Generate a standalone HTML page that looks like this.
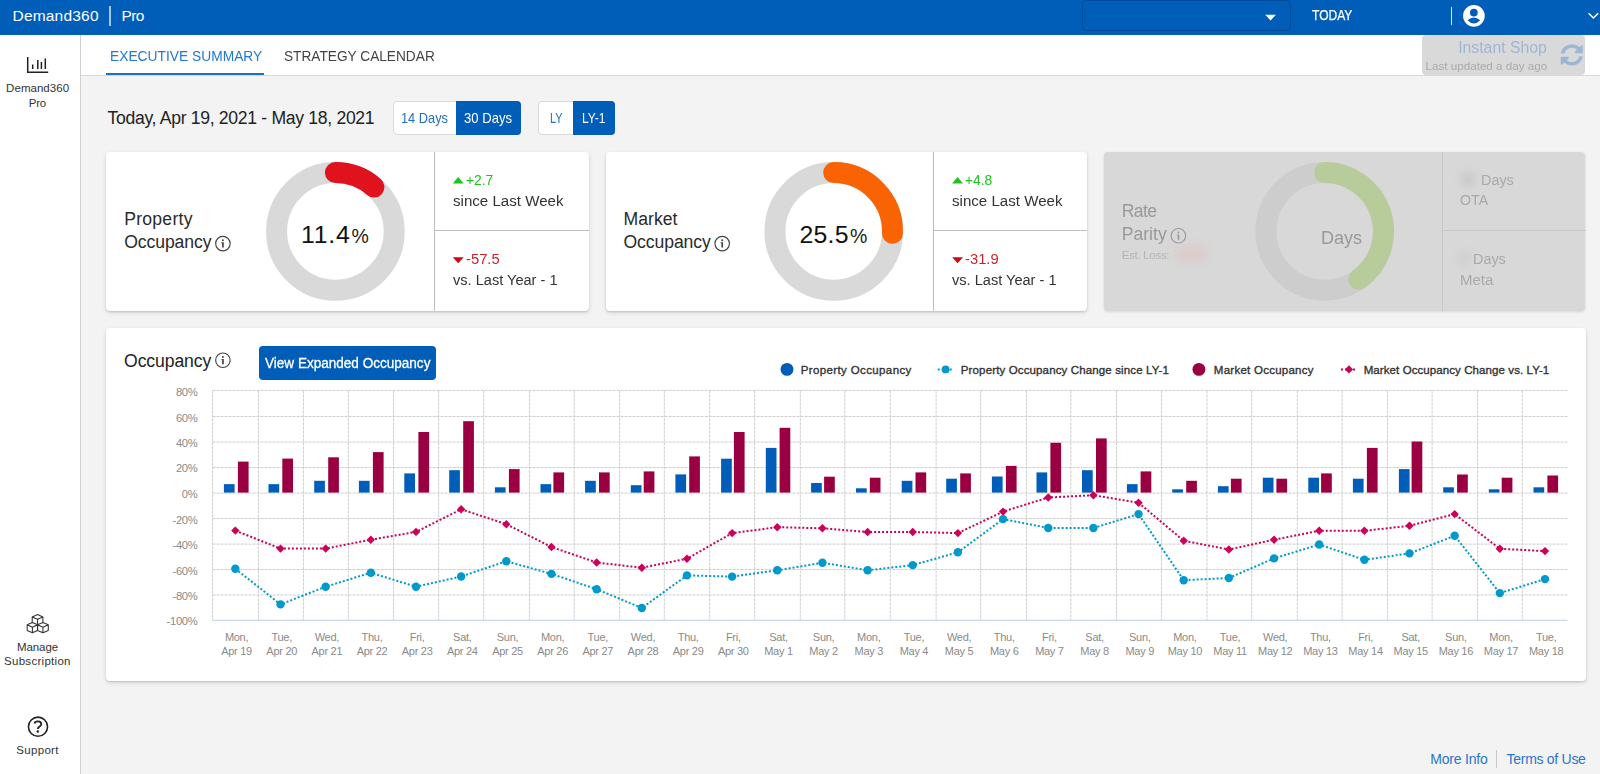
<!DOCTYPE html>
<html><head><meta charset="utf-8"><title>Demand360 Pro</title>
<style>
html,body{margin:0;padding:0;overflow:hidden;}
html{width:1600px;height:774px;}
body{width:1600px;height:774px;overflow:hidden;background:#f3f3f3;font-family:"Liberation Sans",sans-serif;position:relative;}
.t{position:absolute;white-space:nowrap;line-height:1;}
.abs{position:absolute;}
.card{position:absolute;background:#fff;border-radius:4px;box-shadow:0 1px 2px rgba(0,0,0,.14),0 2px 5px rgba(0,0,0,.10);}
svg{position:absolute;overflow:visible;}
</style></head><body>
<div class="abs" style="left:0;top:0;width:1600px;height:34.6px;background:#005eb8;"></div>
<div class="t" id="h_d360" style="top:8.00px;font-size:15.5px;color:#fff;font-weight:normal;letter-spacing:0.194px;left:12.50px;"><span>Demand360</span></div>
<div class="abs" style="left:109px;top:6px;width:1.6px;height:20px;background:rgba(255,255,255,.65);"></div>
<div class="t" id="h_pro" style="top:8.00px;font-size:15.5px;color:#fff;font-weight:normal;letter-spacing:-0.608px;left:121.50px;"><span>Pro</span></div>
<div class="abs" style="left:1082px;top:0.4px;width:209.2px;height:30.2px;border:1px solid #004c9b;border-radius:4px;box-sizing:border-box;background:#005eb8;"></div>
<svg style="left:0;top:0;" width="1600" height="35"><path d="M1265.2 14.8 L1275.9 14.8 L1270.55 20.6 Z" fill="#fff"/></svg>
<div class="t" id="h_today" style="top:8.00px;font-size:14.0px;color:#fff;font-weight:normal;letter-spacing:0.000px;-webkit-text-stroke:0.25px #fff;transform:scaleX(0.8586);transform-origin:left center;left:1312.20px;"><span>TODAY</span></div>
<div class="abs" style="left:1450.9px;top:7px;width:1.6px;height:17.6px;background:rgba(255,255,255,.85);"></div>
<svg style="left:0;top:0;" width="1600" height="774"><g transform="translate(1463.05 4.95) scale(1.0333 1.0333)"><circle cx="10.5" cy="10.5" r="10.5" fill="#fff"/>
<circle cx="10.45" cy="7.4" r="3.75" fill="#005eb8"/>
<path d="M4.4 14.8 Q10.45 9.6 16.6 14.8 Q10.45 21.2 4.4 14.8 Z" fill="#005eb8"/></g></svg>
<svg style="left:0;top:0;" width="1600" height="35"><path d="M1588.6 13.2 L1593.4 18 L1598.2 13.2" fill="none" stroke="#fff" stroke-width="1.5"/></svg>
<div class="abs" style="left:0;top:34.6px;width:80px;height:739.4px;background:#fff;border-right:1px solid #cfcfcf;"></div>
<svg style="left:0;top:0;" width="80" height="120">
<path d="M27.7 57 V72.2 H48.2" fill="none" stroke="#222" stroke-width="1.5"/>
<path d="M32.7 64.6 V69 M37.8 59.9 V69 M41.4 61.9 V69 M45.3 58.6 V69" fill="none" stroke="#222" stroke-width="1.5"/>
</svg>
<div class="t" id="s_d360" style="top:83.00px;font-size:11.5px;color:#333;font-weight:normal;letter-spacing:0.038px;left:-12.40px;width:100px;text-align:center;"><span>Demand360</span></div>
<div class="t" id="s_pro" style="top:98.00px;font-size:11.5px;color:#333;font-weight:normal;letter-spacing:-0.169px;left:-12.60px;width:100px;text-align:center;"><span>Pro</span></div>
<svg style="left:0;top:0;" width="80" height="700">
<g fill="none" stroke="#333" stroke-width="1.05" stroke-linejoin="round" stroke-linecap="round">
<path d="M32.2 622.6 V616.9 L37.56 614.4 L42.9 616.9 V622.6 M32.2 616.9 L37.56 619.3 L42.9 616.9 M37.56 619.3 V624.7"/>
<path d="M27.2 624.7 L32.4 622.5 L37.56 624.7 V630.5 L32.4 632.8 L27.2 630.5 Z M27.2 624.7 L32.4 627.2 L37.56 624.7 M32.4 627.2 V632.8"/>
<path d="M37.56 624.7 L42.9 622.5 L48.3 624.7 V630.5 L42.9 632.8 L37.56 630.5 Z M37.56 624.7 L42.9 627.2 L48.3 624.7 M42.9 627.2 V632.8"/>
</g></svg>
<div class="t" id="s_manage" style="top:642.00px;font-size:11.5px;color:#333;font-weight:normal;letter-spacing:-0.094px;left:-12.50px;width:100px;text-align:center;"><span>Manage</span></div>
<div class="t" id="s_subs" style="top:656.00px;font-size:11.5px;color:#333;font-weight:normal;letter-spacing:0.292px;left:-12.60px;width:100px;text-align:center;"><span>Subscription</span></div>
<svg style="left:0;top:0;" width="1600" height="774"><g transform="translate(27.50 716.20) scale(1.0000 1.0000)"><circle cx="10.5" cy="10.5" r="9.55" fill="none" stroke="#222" stroke-width="1.6"/>
<path d="M7.0 7.3 C7.6 4.4 13.8 4.3 13.8 8.0 C13.8 10.3 10.3 10.5 10.3 12.9" fill="none" stroke="#222" stroke-width="1.85"/>
<circle cx="10.3" cy="15.4" r="1.25" fill="#222"/></g></svg>
<div class="t" id="s_support" style="top:745.00px;font-size:11.5px;color:#333;font-weight:normal;letter-spacing:0.346px;left:-12.50px;width:100px;text-align:center;"><span>Support</span></div>
<div class="abs" style="left:81px;top:34.6px;width:1519px;height:40.4px;background:#fff;border-bottom:1px solid #d9d9d9;"></div>
<div class="t" id="tab1" style="top:48.00px;font-size:15.5px;color:#2478cf;font-weight:normal;letter-spacing:0.000px;transform:scaleX(0.8898);transform-origin:left center;left:109.50px;"><span>EXECUTIVE SUMMARY</span></div>
<div class="abs" style="left:106.3px;top:72.7px;width:158px;height:2.3px;background:#1a6fc9;"></div>
<div class="t" id="tab2" style="top:48.00px;font-size:15.5px;color:#444;font-weight:normal;letter-spacing:0.000px;transform:scaleX(0.8825);transform-origin:left center;left:283.75px;"><span>STRATEGY CALENDAR</span></div>
<div class="abs" style="left:1422.2px;top:35.4px;width:163.3px;height:39.4px;background:#d9d9d9;border-radius:4px;"></div>
<div class="t" id="is1" style="top:40.00px;font-size:16.0px;color:#9fb7d3;font-weight:normal;letter-spacing:0.000px;transform:scaleX(0.9873);transform-origin:right center;right:52.90px;"><span>Instant Shop</span></div>
<div class="t" id="is2" style="top:61.00px;font-size:11.8px;color:#aaaaaa;font-weight:normal;letter-spacing:0.000px;transform:scaleX(0.9884);transform-origin:right center;right:52.90px;"><span>Last updated a day ago</span></div>
<svg style="left:0;top:0;" width="1600" height="774"><g transform="translate(1560.40 43.90) scale(0.0445 0.0430)"><path fill="#9db6d3" d="M370.72 133.28C339.458 104.008 298.888 87.962 255.848 88c-77.458.068-144.328 53.178-162.791 126.85-1.344 5.363-6.122 9.15-11.651 9.15H24.103c-7.498 0-13.194-6.807-11.807-14.176C33.933 94.924 134.813 8 256 8c66.448 0 126.791 26.136 171.315 68.685L463.03 40.97C478.149 25.851 504 36.559 504 57.941V192c0 13.255-10.745 24-24 24H345.941c-21.382 0-32.09-25.851-16.971-40.971l41.75-41.749zM32 296h134.059c21.382 0 32.09 25.851 16.971 40.971l-41.75 41.75c31.262 29.273 71.835 45.319 114.876 45.28 77.418-.07 144.315-53.144 162.787-126.849 1.344-5.363 6.122-9.15 11.651-9.15h57.304c7.498 0 13.194 6.807 11.807 14.176C478.067 417.076 377.187 504 256 504c-66.448 0-126.791-26.136-171.315-68.685L48.97 471.03C33.851 486.149 8 475.441 8 454.059V320c0-13.255 10.745-24 24-24z"/></g></svg>
<div class="t" id="date" style="top:110.00px;font-size:17.6px;color:#222;font-weight:normal;letter-spacing:-0.313px;left:107.50px;"><span>Today, Apr 19, 2021 - May 18, 2021</span></div>
<div class="abs" style="left:392.8px;top:101.2px;width:127.8px;height:33.6px;background:#fff;border:1px solid #dadada;border-radius:4px;box-sizing:border-box;"></div>
<div class="abs" style="left:456px;top:101.2px;width:64.6px;height:33.6px;background:#005eb8;border-radius:0 4px 4px 0;"></div>
<div class="t" id="b14" style="top:111.00px;font-size:14.3px;color:#1f6fc5;font-weight:normal;letter-spacing:0.000px;transform:scaleX(0.8960);transform-origin:left center;left:401.30px;"><span>14 Days</span></div>
<div class="t" id="b30" style="top:111.00px;font-size:14.3px;color:#fff;font-weight:normal;letter-spacing:0.000px;transform:scaleX(0.9151);transform-origin:left center;left:464.30px;"><span>30 Days</span></div>
<div class="abs" style="left:537.9px;top:101.2px;width:76.9px;height:33.6px;background:#fff;border:1px solid #dadada;border-radius:4px;box-sizing:border-box;"></div>
<div class="abs" style="left:573.1px;top:101.2px;width:41.7px;height:33.6px;background:#005eb8;border-radius:0 4px 4px 0;"></div>
<div class="t" id="bly" style="top:111.00px;font-size:14.3px;color:#1f6fc5;font-weight:normal;letter-spacing:0.000px;transform:scaleX(0.7665);transform-origin:left center;left:549.80px;"><span>LY</span></div>
<div class="t" id="bly1" style="top:111.00px;font-size:14.3px;color:#fff;font-weight:normal;letter-spacing:0.000px;transform:scaleX(0.8445);transform-origin:left center;left:582.00px;"><span>LY-1</span></div>
<div class="card" style="left:106.3px;top:152.2px;width:482.4px;height:158.8px;"></div>
<div class="abs" style="left:434.0px;top:152.2px;width:1px;height:158.8px;background:#bdbdbd;"></div>
<div class="abs" style="left:434.0px;top:230.2px;width:154.7px;height:1px;background:#bdbdbd;"></div>
<div class="t" id="k1l1" style="top:211.00px;font-size:17.6px;color:#2a2a2a;font-weight:normal;letter-spacing:0.250px;left:124.20px;"><span>Property</span></div>
<div class="t" id="k1l2" style="top:234.00px;font-size:17.6px;color:#2a2a2a;font-weight:normal;letter-spacing:-0.091px;left:124.20px;"><span>Occupancy</span></div>
<svg style="left:0;top:0;" width="1600" height="774"><g transform="translate(214.90 235.60) scale(1.0000 1.0000)"><circle cx="8" cy="8" r="7.25" fill="none" stroke="#444" stroke-width="1.15"/><circle cx="8" cy="4.75" r="1.0" fill="#444"/><path d="M6.4 6.7 H8.9 V12 H7.2 V7.6 H6.4 Z" fill="#444"/></g></svg>
<svg style="left:0;top:0;" width="1600" height="320"><circle cx="335.40" cy="231.4" r="58.8" fill="none" stroke="#d9d9d9" stroke-width="21"/><path d="M335.40 172.60 A58.8 58.8 0 0 1 374.01 187.05" fill="none" stroke="#e0121e" stroke-width="21" stroke-linecap="round"/></svg>
<div class="t" id="k1v" style="top:223.00px;font-size:24.8px;color:#111;font-weight:normal;letter-spacing:0.770px;left:301.10px;"><span>11.4</span></div>
<div class="t" id="k1p" style="top:227.00px;font-size:19.5px;color:#222;font-weight:normal;letter-spacing:0.000px;left:351.60px;"><span>%</span></div>
<svg style="left:0;top:0;" width="1600" height="320"><path d="M452.8 183.5 L463.7 183.5 L458.2 177.1 Z" fill="#1fc21f"/><path d="M452.8 257.3 L463.7 257.3 L458.2 263.2 Z" fill="#cc0a14"/></svg>
<div class="t" id="k1u" style="top:172.00px;font-size:15.3px;color:#22c122;font-weight:normal;letter-spacing:0.000px;transform:scaleX(0.9039);transform-origin:left center;left:466.00px;"><span>+2.7</span></div>
<div class="t" id="k1u2" style="top:193.00px;font-size:15.5px;color:#333;font-weight:normal;letter-spacing:0.000px;transform:scaleX(0.9741);transform-origin:left center;left:452.80px;"><span>since Last Week</span></div>
<div class="t" id="k1d" style="top:251.00px;font-size:15.3px;color:#d0202d;font-weight:normal;letter-spacing:0.000px;transform:scaleX(0.9663);transform-origin:left center;left:466.00px;"><span>-57.5</span></div>
<div class="t" id="k1d2" style="top:272.00px;font-size:15.5px;color:#333;font-weight:normal;letter-spacing:0.000px;transform:scaleX(0.9401);transform-origin:left center;left:452.80px;"><span>vs. Last Year - 1</span></div>
<div class="card" style="left:605.6px;top:152.2px;width:481.7px;height:158.8px;"></div>
<div class="abs" style="left:933.3px;top:152.2px;width:1px;height:158.8px;background:#bdbdbd;"></div>
<div class="abs" style="left:933.3px;top:230.2px;width:154.0px;height:1px;background:#bdbdbd;"></div>
<div class="t" id="k2l1" style="top:211.00px;font-size:17.6px;color:#2a2a2a;font-weight:normal;letter-spacing:0.036px;left:623.50px;"><span>Market</span></div>
<div class="t" id="k2l2" style="top:234.00px;font-size:17.6px;color:#2a2a2a;font-weight:normal;letter-spacing:-0.091px;left:623.50px;"><span>Occupancy</span></div>
<svg style="left:0;top:0;" width="1600" height="774"><g transform="translate(714.20 235.60) scale(1.0000 1.0000)"><circle cx="8" cy="8" r="7.25" fill="none" stroke="#444" stroke-width="1.15"/><circle cx="8" cy="4.75" r="1.0" fill="#444"/><path d="M6.4 6.7 H8.9 V12 H7.2 V7.6 H6.4 Z" fill="#444"/></g></svg>
<svg style="left:0;top:0;" width="1600" height="320"><circle cx="833.70" cy="231.4" r="58.8" fill="none" stroke="#d9d9d9" stroke-width="21"/><path d="M833.70 172.60 A58.8 58.8 0 0 1 892.47 233.25" fill="none" stroke="#f96302" stroke-width="21" stroke-linecap="round"/></svg>
<div class="t" id="k2v" style="top:223.00px;font-size:24.8px;color:#111;font-weight:normal;letter-spacing:0.309px;left:799.40px;"><span>25.5</span></div>
<div class="t" id="k2p" style="top:227.00px;font-size:19.5px;color:#222;font-weight:normal;letter-spacing:0.000px;left:849.90px;"><span>%</span></div>
<svg style="left:0;top:0;" width="1600" height="320"><path d="M952.1 183.5 L963.0 183.5 L957.6 177.1 Z" fill="#1fc21f"/><path d="M952.1 257.3 L963.0 257.3 L957.6 263.2 Z" fill="#cc0a14"/></svg>
<div class="t" id="k2u" style="top:172.00px;font-size:15.3px;color:#22c122;font-weight:normal;letter-spacing:0.000px;transform:scaleX(0.9039);transform-origin:left center;left:965.30px;"><span>+4.8</span></div>
<div class="t" id="k2u2" style="top:193.00px;font-size:15.5px;color:#333;font-weight:normal;letter-spacing:0.000px;transform:scaleX(0.9741);transform-origin:left center;left:952.10px;"><span>since Last Week</span></div>
<div class="t" id="k2d" style="top:251.00px;font-size:15.3px;color:#d0202d;font-weight:normal;letter-spacing:0.000px;transform:scaleX(0.9663);transform-origin:left center;left:965.30px;"><span>-31.9</span></div>
<div class="t" id="k2d2" style="top:272.00px;font-size:15.5px;color:#333;font-weight:normal;letter-spacing:0.000px;transform:scaleX(0.9401);transform-origin:left center;left:952.10px;"><span>vs. Last Year - 1</span></div>
<div class="abs" style="left:0;top:0;width:1600px;height:330px;filter:blur(0.5px);">
<div class="card" style="left:1104.2px;top:152.2px;width:481.3px;height:158.6px;background:#d8d8d8;box-shadow:0 1px 3px rgba(0,0,0,.12);"></div>
<div class="abs" style="left:1442.1px;top:152.2px;width:1px;height:158.8px;background:#c8c8c8;"></div>
<div class="abs" style="left:1442.1px;top:230.2px;width:143.5px;height:1px;background:#c8c8c8;"></div>
<div class="t" id="k3l1" style="top:203.00px;font-size:17.6px;color:#999;font-weight:normal;letter-spacing:-0.593px;left:1121.70px;"><span>Rate</span></div>
<div class="t" id="k3l2" style="top:226.00px;font-size:17.6px;color:#999;font-weight:normal;letter-spacing:0.003px;left:1121.70px;"><span>Parity</span></div>
<svg style="left:0;top:0;" width="1600" height="774"><g transform="translate(1170.40 227.70) scale(1.0000 1.0000)"><circle cx="8" cy="8" r="7.25" fill="none" stroke="#9a9a9a" stroke-width="1.15"/><circle cx="8" cy="4.75" r="1.0" fill="#9a9a9a"/><path d="M6.4 6.7 H8.9 V12 H7.2 V7.6 H6.4 Z" fill="#9a9a9a"/></g></svg>
<div class="t" id="k3l3" style="top:250.00px;font-size:11.4px;color:#b4b4b4;font-weight:normal;letter-spacing:-0.242px;left:1121.70px;"><span>Est. Loss:</span></div>
<div class="abs" style="left:1174px;top:247px;width:34px;height:14px;border-radius:7px;background:rgba(228,190,190,.5);filter:blur(5px);"></div>
<svg style="left:0;top:0;" width="1600" height="320"><circle cx="1324.7" cy="231.3" r="58.8" fill="none" stroke="#cdcdcd" stroke-width="21"/><path d="M1324.70 172.50 A58.8 58.8 0 0 1 1358.85 279.17" fill="none" stroke="#b8cb9a" stroke-width="21" stroke-linecap="round"/></svg>
<div class="t" id="k3v" style="top:229.00px;font-size:18px;color:#999;font-weight:normal;letter-spacing:-0.004px;left:1321.00px;"><span>Days</span></div>
<div class="abs" style="left:1460px;top:172px;width:16px;height:15px;border-radius:6px;background:rgba(200,200,200,.8);filter:blur(3.5px);"></div>
<div class="t" id="k3a" style="top:172.00px;font-size:15.5px;color:#a9a9a9;font-weight:normal;letter-spacing:0.000px;transform:scaleX(0.9284);transform-origin:left center;left:1481.25px;"><span>Days</span></div>
<div class="t" id="k3b" style="top:192.00px;font-size:15.5px;color:#a9a9a9;font-weight:normal;letter-spacing:0.000px;transform:scaleX(0.9148);transform-origin:left center;left:1460.30px;"><span>OTA</span></div>
<div class="abs" style="left:1459px;top:251px;width:11px;height:15px;border-radius:6px;background:rgba(205,205,205,.8);filter:blur(3.5px);"></div>
<div class="t" id="k3c" style="top:251.00px;font-size:15.5px;color:#a9a9a9;font-weight:normal;letter-spacing:0.000px;transform:scaleX(0.9284);transform-origin:left center;left:1472.80px;"><span>Days</span></div>
<div class="t" id="k3d" style="top:272.00px;font-size:15.5px;color:#a9a9a9;font-weight:normal;letter-spacing:0.000px;transform:scaleX(0.9690);transform-origin:left center;left:1460.30px;"><span>Meta</span></div>
</div>
<div class="card" style="left:106.3px;top:327.6px;width:1479.4px;height:353.0px;"></div>
<div class="t" id="c_title" style="top:353.00px;font-size:17.6px;color:#222;font-weight:normal;letter-spacing:-0.113px;left:124.10px;"><span>Occupancy</span></div>
<svg style="left:0;top:0;" width="1600" height="774"><g transform="translate(214.90 352.20) scale(1.0000 1.0000)"><circle cx="8" cy="8" r="7.25" fill="none" stroke="#444" stroke-width="1.15"/><circle cx="8" cy="4.75" r="1.0" fill="#444"/><path d="M6.4 6.7 H8.9 V12 H7.2 V7.6 H6.4 Z" fill="#444"/></g></svg>
<div class="abs" style="left:259.1px;top:345.7px;width:176.6px;height:34px;background:#005eb8;border-radius:4px;"></div>
<div class="t" id="c_btn" style="top:356.00px;font-size:14.7px;color:#fff;font-weight:normal;letter-spacing:0.000px;-webkit-text-stroke:0.3px #fff;transform:scaleX(0.9222);transform-origin:left center;left:264.90px;"><span>View Expanded Occupancy</span></div>
<svg style="left:0;top:0;" width="1600" height="400"><circle cx="787" cy="369.4" r="6.45" fill="#005eb8"/><path d="M937.7 369.4 H953" stroke="#0099cc" stroke-width="2" stroke-dasharray="2 2" fill="none"/><circle cx="945.6" cy="369.4" r="3.9" fill="#0099cc"/><circle cx="1198.9" cy="369.4" r="6.45" fill="#9a0041"/><path d="M1341 369.4 H1356.6" stroke="#cc0058" stroke-width="2" stroke-dasharray="2 2" fill="none"/><path d="M1349 365.29999999999995 l4.1 4.1 l-4.1 4.1 l-4.1 -4.1 Z" fill="#cc0058"/></svg>
<div class="t" id="lg1" style="top:365.00px;font-size:11.5px;color:#333;font-weight:normal;letter-spacing:0.378px;-webkit-text-stroke:0.35px #333;left:800.70px;"><span>Property Occupancy</span></div>
<div class="t" id="lg2" style="top:365.00px;font-size:11.5px;color:#333;font-weight:normal;letter-spacing:0.136px;-webkit-text-stroke:0.35px #333;left:960.80px;"><span>Property Occupancy Change since LY-1</span></div>
<div class="t" id="lg3" style="top:365.00px;font-size:11.5px;color:#333;font-weight:normal;letter-spacing:0.258px;-webkit-text-stroke:0.35px #333;left:1213.80px;"><span>Market Occupancy</span></div>
<div class="t" id="lg4" style="top:365.00px;font-size:11.5px;color:#333;font-weight:normal;letter-spacing:0.087px;-webkit-text-stroke:0.35px #333;left:1363.70px;"><span>Market Occupancy Change vs. LY-1</span></div>
<svg style="left:0;top:0;" width="1600" height="700">
<g fill="none" stroke="#cdcdcd" stroke-width="1" stroke-dasharray="3 1">
<path d="M212.6 390.35 H1567.5"/><path d="M212.6 416.45 H1567.5"/><path d="M212.6 442.1 H1567.5"/><path d="M212.6 467.55 H1567.5"/><path d="M212.6 493.1 H1567.5"/><path d="M212.6 518.6 H1567.5"/><path d="M212.6 544.1 H1567.5"/><path d="M212.6 569.5 H1567.5"/><path d="M212.6 594.95 H1567.5"/><path d="M212.60 390.35 V620.4"/><path d="M258.40 390.35 V620.4"/><path d="M303.40 390.35 V620.4"/><path d="M348.40 390.35 V620.4"/><path d="M393.50 390.35 V620.4"/><path d="M438.70 390.35 V620.4"/><path d="M483.70 390.35 V620.4"/><path d="M529.40 390.35 V620.4"/><path d="M574.20 390.35 V620.4"/><path d="M619.60 390.35 V620.4"/><path d="M664.30 390.35 V620.4"/><path d="M709.70 390.35 V620.4"/><path d="M754.70 390.35 V620.4"/><path d="M800.30 390.35 V620.4"/><path d="M844.80 390.35 V620.4"/><path d="M890.30 390.35 V620.4"/><path d="M936.10 390.35 V620.4"/><path d="M980.70 390.35 V620.4"/><path d="M1026.40 390.35 V620.4"/><path d="M1070.80 390.35 V620.4"/><path d="M1116.50 390.35 V620.4"/><path d="M1161.40 390.35 V620.4"/><path d="M1207.00 390.35 V620.4"/><path d="M1251.70 390.35 V620.4"/><path d="M1297.30 390.35 V620.4"/><path d="M1342.10 390.35 V620.4"/><path d="M1387.40 390.35 V620.4"/><path d="M1432.10 390.35 V620.4"/><path d="M1477.60 390.35 V620.4"/><path d="M1522.30 390.35 V620.4"/></g>
<path d="M212.6 620.4 H1567.5" stroke="#ccd6eb" stroke-width="1.2" fill="none"/>
<g fill="#005eb8"><rect x="223.9" y="484.15" width="10.7" height="8.45"/><rect x="268.5" y="484.15" width="10.7" height="8.45"/><rect x="314.2" y="480.80" width="10.7" height="11.80"/><rect x="358.9" y="480.80" width="10.7" height="11.80"/><rect x="404.3" y="473.40" width="10.7" height="19.20"/><rect x="449.2" y="470.20" width="10.7" height="22.40"/><rect x="494.9" y="487.30" width="10.7" height="5.30"/><rect x="540.5" y="484.15" width="10.7" height="8.45"/><rect x="585.1" y="480.80" width="10.7" height="11.80"/><rect x="630.8" y="485.20" width="10.7" height="7.40"/><rect x="675.4" y="474.40" width="10.7" height="18.20"/><rect x="721.1" y="458.70" width="10.7" height="33.90"/><rect x="765.8" y="447.90" width="10.7" height="44.70"/><rect x="811.1" y="483.00" width="10.7" height="9.60"/><rect x="856.0" y="488.30" width="10.7" height="4.30"/><rect x="901.7" y="480.80" width="10.7" height="11.80"/><rect x="946.2" y="478.70" width="10.7" height="13.90"/><rect x="991.9" y="476.50" width="10.7" height="16.10"/><rect x="1036.5" y="472.40" width="10.7" height="20.20"/><rect x="1082.0" y="470.20" width="10.7" height="22.40"/><rect x="1126.9" y="484.15" width="10.7" height="8.45"/><rect x="1172.2" y="489.30" width="10.7" height="3.30"/><rect x="1217.9" y="486.20" width="10.7" height="6.40"/><rect x="1262.8" y="477.70" width="10.7" height="14.90"/><rect x="1308.3" y="477.70" width="10.7" height="14.90"/><rect x="1352.9" y="478.70" width="10.7" height="13.90"/><rect x="1398.9" y="469.10" width="10.7" height="23.50"/><rect x="1443.2" y="487.30" width="10.7" height="5.30"/><rect x="1488.8" y="489.30" width="10.7" height="3.30"/><rect x="1533.5" y="487.30" width="10.7" height="5.30"/></g>
<g fill="#9a0041"><rect x="237.9" y="461.60" width="10.7" height="31.00"/><rect x="282.3" y="458.60" width="10.7" height="34.00"/><rect x="328.2" y="457.30" width="10.7" height="35.30"/><rect x="372.9" y="452.10" width="10.7" height="40.50"/><rect x="418.4" y="432.00" width="10.7" height="60.60"/><rect x="463.2" y="421.20" width="10.7" height="71.40"/><rect x="508.9" y="469.10" width="10.7" height="23.50"/><rect x="553.4" y="472.40" width="10.7" height="20.20"/><rect x="599.0" y="472.40" width="10.7" height="20.20"/><rect x="643.7" y="471.40" width="10.7" height="21.20"/><rect x="689.2" y="456.40" width="10.7" height="36.20"/><rect x="733.9" y="432.00" width="10.7" height="60.60"/><rect x="779.6" y="427.80" width="10.7" height="64.80"/><rect x="824.1" y="476.70" width="10.7" height="15.90"/><rect x="869.8" y="477.70" width="10.7" height="14.90"/><rect x="915.5" y="472.40" width="10.7" height="20.20"/><rect x="960.2" y="473.40" width="10.7" height="19.20"/><rect x="1005.9" y="465.90" width="10.7" height="26.70"/><rect x="1050.4" y="442.75" width="10.7" height="49.85"/><rect x="1096.0" y="438.40" width="10.7" height="54.20"/><rect x="1140.6" y="471.40" width="10.7" height="21.20"/><rect x="1186.2" y="480.80" width="10.7" height="11.80"/><rect x="1230.9" y="478.70" width="10.7" height="13.90"/><rect x="1276.4" y="478.70" width="10.7" height="13.90"/><rect x="1321.1" y="473.40" width="10.7" height="19.20"/><rect x="1366.9" y="447.90" width="10.7" height="44.70"/><rect x="1411.6" y="441.50" width="10.7" height="51.10"/><rect x="1457.1" y="474.50" width="10.7" height="18.10"/><rect x="1501.7" y="477.70" width="10.7" height="14.90"/><rect x="1547.4" y="475.50" width="10.7" height="17.10"/></g>
<path d="M235.35 568.75 L280.51 604.40 L325.67 586.70 L370.83 572.70 L415.99 586.70 L461.15 576.50 L506.31 561.25 L551.47 573.90 L596.63 589.20 L641.79 608.00 L686.95 575.40 L732.11 576.60 L777.27 570.30 L822.43 562.70 L867.59 570.30 L912.75 565.10 L957.91 552.30 L1003.07 519.10 L1048.23 528.00 L1093.39 528.00 L1138.55 514.10 L1183.71 580.20 L1228.87 578.00 L1274.03 558.40 L1319.19 544.50 L1364.35 559.80 L1409.51 553.40 L1454.67 535.80 L1499.83 593.10 L1544.99 579.10" fill="none" stroke="#0099cc" stroke-width="2" stroke-dasharray="2 2" stroke-linejoin="round"/>
<g fill="#0099cc"><circle cx="235.35" cy="568.75" r="4.2"/><circle cx="280.51" cy="604.40" r="4.2"/><circle cx="325.67" cy="586.70" r="4.2"/><circle cx="370.83" cy="572.70" r="4.2"/><circle cx="415.99" cy="586.70" r="4.2"/><circle cx="461.15" cy="576.50" r="4.2"/><circle cx="506.31" cy="561.25" r="4.2"/><circle cx="551.47" cy="573.90" r="4.2"/><circle cx="596.63" cy="589.20" r="4.2"/><circle cx="641.79" cy="608.00" r="4.2"/><circle cx="686.95" cy="575.40" r="4.2"/><circle cx="732.11" cy="576.60" r="4.2"/><circle cx="777.27" cy="570.30" r="4.2"/><circle cx="822.43" cy="562.70" r="4.2"/><circle cx="867.59" cy="570.30" r="4.2"/><circle cx="912.75" cy="565.10" r="4.2"/><circle cx="957.91" cy="552.30" r="4.2"/><circle cx="1003.07" cy="519.10" r="4.2"/><circle cx="1048.23" cy="528.00" r="4.2"/><circle cx="1093.39" cy="528.00" r="4.2"/><circle cx="1138.55" cy="514.10" r="4.2"/><circle cx="1183.71" cy="580.20" r="4.2"/><circle cx="1228.87" cy="578.00" r="4.2"/><circle cx="1274.03" cy="558.40" r="4.2"/><circle cx="1319.19" cy="544.50" r="4.2"/><circle cx="1364.35" cy="559.80" r="4.2"/><circle cx="1409.51" cy="553.40" r="4.2"/><circle cx="1454.67" cy="535.80" r="4.2"/><circle cx="1499.83" cy="593.10" r="4.2"/><circle cx="1544.99" cy="579.10" r="4.2"/></g>
<path d="M235.35 530.60 L280.51 548.60 L325.67 548.60 L370.83 539.70 L415.99 531.90 L461.15 509.30 L506.31 524.20 L551.47 547.00 L596.63 562.50 L641.79 567.70 L686.95 558.75 L732.11 533.10 L777.27 527.20 L822.43 528.30 L867.59 532.00 L912.75 532.00 L957.91 533.10 L1003.07 511.60 L1048.23 497.50 L1093.39 495.20 L1138.55 502.70 L1183.71 540.80 L1228.87 549.50 L1274.03 539.70 L1319.19 530.80 L1364.35 530.80 L1409.51 525.80 L1454.67 514.10 L1499.83 548.75 L1544.99 551.10" fill="none" stroke="#cc0058" stroke-width="2" stroke-dasharray="2 2" stroke-linejoin="round"/>
<g fill="#cc0058"><path d="M235.35 526.40 l4.2 4.2 l-4.2 4.2 l-4.2 -4.2 Z"/><path d="M280.51 544.40 l4.2 4.2 l-4.2 4.2 l-4.2 -4.2 Z"/><path d="M325.67 544.40 l4.2 4.2 l-4.2 4.2 l-4.2 -4.2 Z"/><path d="M370.83 535.50 l4.2 4.2 l-4.2 4.2 l-4.2 -4.2 Z"/><path d="M415.99 527.70 l4.2 4.2 l-4.2 4.2 l-4.2 -4.2 Z"/><path d="M461.15 505.10 l4.2 4.2 l-4.2 4.2 l-4.2 -4.2 Z"/><path d="M506.31 520.00 l4.2 4.2 l-4.2 4.2 l-4.2 -4.2 Z"/><path d="M551.47 542.80 l4.2 4.2 l-4.2 4.2 l-4.2 -4.2 Z"/><path d="M596.63 558.30 l4.2 4.2 l-4.2 4.2 l-4.2 -4.2 Z"/><path d="M641.79 563.50 l4.2 4.2 l-4.2 4.2 l-4.2 -4.2 Z"/><path d="M686.95 554.55 l4.2 4.2 l-4.2 4.2 l-4.2 -4.2 Z"/><path d="M732.11 528.90 l4.2 4.2 l-4.2 4.2 l-4.2 -4.2 Z"/><path d="M777.27 523.00 l4.2 4.2 l-4.2 4.2 l-4.2 -4.2 Z"/><path d="M822.43 524.10 l4.2 4.2 l-4.2 4.2 l-4.2 -4.2 Z"/><path d="M867.59 527.80 l4.2 4.2 l-4.2 4.2 l-4.2 -4.2 Z"/><path d="M912.75 527.80 l4.2 4.2 l-4.2 4.2 l-4.2 -4.2 Z"/><path d="M957.91 528.90 l4.2 4.2 l-4.2 4.2 l-4.2 -4.2 Z"/><path d="M1003.07 507.40 l4.2 4.2 l-4.2 4.2 l-4.2 -4.2 Z"/><path d="M1048.23 493.30 l4.2 4.2 l-4.2 4.2 l-4.2 -4.2 Z"/><path d="M1093.39 491.00 l4.2 4.2 l-4.2 4.2 l-4.2 -4.2 Z"/><path d="M1138.55 498.50 l4.2 4.2 l-4.2 4.2 l-4.2 -4.2 Z"/><path d="M1183.71 536.60 l4.2 4.2 l-4.2 4.2 l-4.2 -4.2 Z"/><path d="M1228.87 545.30 l4.2 4.2 l-4.2 4.2 l-4.2 -4.2 Z"/><path d="M1274.03 535.50 l4.2 4.2 l-4.2 4.2 l-4.2 -4.2 Z"/><path d="M1319.19 526.60 l4.2 4.2 l-4.2 4.2 l-4.2 -4.2 Z"/><path d="M1364.35 526.60 l4.2 4.2 l-4.2 4.2 l-4.2 -4.2 Z"/><path d="M1409.51 521.60 l4.2 4.2 l-4.2 4.2 l-4.2 -4.2 Z"/><path d="M1454.67 509.90 l4.2 4.2 l-4.2 4.2 l-4.2 -4.2 Z"/><path d="M1499.83 544.55 l4.2 4.2 l-4.2 4.2 l-4.2 -4.2 Z"/><path d="M1544.99 546.90 l4.2 4.2 l-4.2 4.2 l-4.2 -4.2 Z"/></g>
</svg>
<div class="t" id="yl0" style="top:387.00px;font-size:11.2px;color:#8a8a8a;font-weight:normal;letter-spacing:-0.330px;right:1402.70px;"><span>80%</span></div>
<div class="t" id="yl1" style="top:413.00px;font-size:11.2px;color:#8a8a8a;font-weight:normal;letter-spacing:-0.330px;right:1402.70px;"><span>60%</span></div>
<div class="t" id="yl2" style="top:438.00px;font-size:11.2px;color:#8a8a8a;font-weight:normal;letter-spacing:-0.330px;right:1402.70px;"><span>40%</span></div>
<div class="t" id="yl3" style="top:463.00px;font-size:11.2px;color:#8a8a8a;font-weight:normal;letter-spacing:-0.330px;right:1402.70px;"><span>20%</span></div>
<div class="t" id="yl4" style="top:489.00px;font-size:11.2px;color:#8a8a8a;font-weight:normal;letter-spacing:-0.330px;right:1402.70px;"><span>0%</span></div>
<div class="t" id="yl5" style="top:515.00px;font-size:11.2px;color:#8a8a8a;font-weight:normal;letter-spacing:-0.330px;right:1402.70px;"><span>-20%</span></div>
<div class="t" id="yl6" style="top:540.00px;font-size:11.2px;color:#8a8a8a;font-weight:normal;letter-spacing:-0.330px;right:1402.70px;"><span>-40%</span></div>
<div class="t" id="yl7" style="top:566.00px;font-size:11.2px;color:#8a8a8a;font-weight:normal;letter-spacing:-0.330px;right:1402.70px;"><span>-60%</span></div>
<div class="t" id="yl8" style="top:591.00px;font-size:11.2px;color:#8a8a8a;font-weight:normal;letter-spacing:-0.330px;right:1402.70px;"><span>-80%</span></div>
<div class="t" id="yl9" style="top:616.00px;font-size:11.2px;color:#8a8a8a;font-weight:normal;letter-spacing:-0.330px;right:1402.70px;"><span>-100%</span></div>
<div class="t" id="xa0" style="top:632.00px;font-size:11.0px;color:#8a8a8a;font-weight:normal;letter-spacing:-0.280px;left:186.55px;width:100px;text-align:center;"><span>Mon,</span></div>
<div class="t" id="xb0" style="top:646.00px;font-size:11.0px;color:#8a8a8a;font-weight:normal;letter-spacing:-0.280px;left:186.55px;width:100px;text-align:center;"><span>Apr 19</span></div>
<div class="t" id="xa1" style="top:632.00px;font-size:11.0px;color:#8a8a8a;font-weight:normal;letter-spacing:-0.280px;left:231.71px;width:100px;text-align:center;"><span>Tue,</span></div>
<div class="t" id="xb1" style="top:646.00px;font-size:11.0px;color:#8a8a8a;font-weight:normal;letter-spacing:-0.280px;left:231.71px;width:100px;text-align:center;"><span>Apr 20</span></div>
<div class="t" id="xa2" style="top:632.00px;font-size:11.0px;color:#8a8a8a;font-weight:normal;letter-spacing:-0.280px;left:276.87px;width:100px;text-align:center;"><span>Wed,</span></div>
<div class="t" id="xb2" style="top:646.00px;font-size:11.0px;color:#8a8a8a;font-weight:normal;letter-spacing:-0.280px;left:276.87px;width:100px;text-align:center;"><span>Apr 21</span></div>
<div class="t" id="xa3" style="top:632.00px;font-size:11.0px;color:#8a8a8a;font-weight:normal;letter-spacing:-0.280px;left:322.03px;width:100px;text-align:center;"><span>Thu,</span></div>
<div class="t" id="xb3" style="top:646.00px;font-size:11.0px;color:#8a8a8a;font-weight:normal;letter-spacing:-0.280px;left:322.03px;width:100px;text-align:center;"><span>Apr 22</span></div>
<div class="t" id="xa4" style="top:632.00px;font-size:11.0px;color:#8a8a8a;font-weight:normal;letter-spacing:-0.280px;left:367.19px;width:100px;text-align:center;"><span>Fri,</span></div>
<div class="t" id="xb4" style="top:646.00px;font-size:11.0px;color:#8a8a8a;font-weight:normal;letter-spacing:-0.280px;left:367.19px;width:100px;text-align:center;"><span>Apr 23</span></div>
<div class="t" id="xa5" style="top:632.00px;font-size:11.0px;color:#8a8a8a;font-weight:normal;letter-spacing:-0.280px;left:412.35px;width:100px;text-align:center;"><span>Sat,</span></div>
<div class="t" id="xb5" style="top:646.00px;font-size:11.0px;color:#8a8a8a;font-weight:normal;letter-spacing:-0.280px;left:412.35px;width:100px;text-align:center;"><span>Apr 24</span></div>
<div class="t" id="xa6" style="top:632.00px;font-size:11.0px;color:#8a8a8a;font-weight:normal;letter-spacing:-0.280px;left:457.51px;width:100px;text-align:center;"><span>Sun,</span></div>
<div class="t" id="xb6" style="top:646.00px;font-size:11.0px;color:#8a8a8a;font-weight:normal;letter-spacing:-0.280px;left:457.51px;width:100px;text-align:center;"><span>Apr 25</span></div>
<div class="t" id="xa7" style="top:632.00px;font-size:11.0px;color:#8a8a8a;font-weight:normal;letter-spacing:-0.280px;left:502.67px;width:100px;text-align:center;"><span>Mon,</span></div>
<div class="t" id="xb7" style="top:646.00px;font-size:11.0px;color:#8a8a8a;font-weight:normal;letter-spacing:-0.280px;left:502.67px;width:100px;text-align:center;"><span>Apr 26</span></div>
<div class="t" id="xa8" style="top:632.00px;font-size:11.0px;color:#8a8a8a;font-weight:normal;letter-spacing:-0.280px;left:547.83px;width:100px;text-align:center;"><span>Tue,</span></div>
<div class="t" id="xb8" style="top:646.00px;font-size:11.0px;color:#8a8a8a;font-weight:normal;letter-spacing:-0.280px;left:547.83px;width:100px;text-align:center;"><span>Apr 27</span></div>
<div class="t" id="xa9" style="top:632.00px;font-size:11.0px;color:#8a8a8a;font-weight:normal;letter-spacing:-0.280px;left:592.99px;width:100px;text-align:center;"><span>Wed,</span></div>
<div class="t" id="xb9" style="top:646.00px;font-size:11.0px;color:#8a8a8a;font-weight:normal;letter-spacing:-0.280px;left:592.99px;width:100px;text-align:center;"><span>Apr 28</span></div>
<div class="t" id="xa10" style="top:632.00px;font-size:11.0px;color:#8a8a8a;font-weight:normal;letter-spacing:-0.280px;left:638.15px;width:100px;text-align:center;"><span>Thu,</span></div>
<div class="t" id="xb10" style="top:646.00px;font-size:11.0px;color:#8a8a8a;font-weight:normal;letter-spacing:-0.280px;left:638.15px;width:100px;text-align:center;"><span>Apr 29</span></div>
<div class="t" id="xa11" style="top:632.00px;font-size:11.0px;color:#8a8a8a;font-weight:normal;letter-spacing:-0.280px;left:683.31px;width:100px;text-align:center;"><span>Fri,</span></div>
<div class="t" id="xb11" style="top:646.00px;font-size:11.0px;color:#8a8a8a;font-weight:normal;letter-spacing:-0.280px;left:683.31px;width:100px;text-align:center;"><span>Apr 30</span></div>
<div class="t" id="xa12" style="top:632.00px;font-size:11.0px;color:#8a8a8a;font-weight:normal;letter-spacing:-0.280px;left:728.47px;width:100px;text-align:center;"><span>Sat,</span></div>
<div class="t" id="xb12" style="top:646.00px;font-size:11.0px;color:#8a8a8a;font-weight:normal;letter-spacing:-0.280px;left:728.47px;width:100px;text-align:center;"><span>May 1</span></div>
<div class="t" id="xa13" style="top:632.00px;font-size:11.0px;color:#8a8a8a;font-weight:normal;letter-spacing:-0.280px;left:773.63px;width:100px;text-align:center;"><span>Sun,</span></div>
<div class="t" id="xb13" style="top:646.00px;font-size:11.0px;color:#8a8a8a;font-weight:normal;letter-spacing:-0.280px;left:773.63px;width:100px;text-align:center;"><span>May 2</span></div>
<div class="t" id="xa14" style="top:632.00px;font-size:11.0px;color:#8a8a8a;font-weight:normal;letter-spacing:-0.280px;left:818.79px;width:100px;text-align:center;"><span>Mon,</span></div>
<div class="t" id="xb14" style="top:646.00px;font-size:11.0px;color:#8a8a8a;font-weight:normal;letter-spacing:-0.280px;left:818.79px;width:100px;text-align:center;"><span>May 3</span></div>
<div class="t" id="xa15" style="top:632.00px;font-size:11.0px;color:#8a8a8a;font-weight:normal;letter-spacing:-0.280px;left:863.95px;width:100px;text-align:center;"><span>Tue,</span></div>
<div class="t" id="xb15" style="top:646.00px;font-size:11.0px;color:#8a8a8a;font-weight:normal;letter-spacing:-0.280px;left:863.95px;width:100px;text-align:center;"><span>May 4</span></div>
<div class="t" id="xa16" style="top:632.00px;font-size:11.0px;color:#8a8a8a;font-weight:normal;letter-spacing:-0.280px;left:909.11px;width:100px;text-align:center;"><span>Wed,</span></div>
<div class="t" id="xb16" style="top:646.00px;font-size:11.0px;color:#8a8a8a;font-weight:normal;letter-spacing:-0.280px;left:909.11px;width:100px;text-align:center;"><span>May 5</span></div>
<div class="t" id="xa17" style="top:632.00px;font-size:11.0px;color:#8a8a8a;font-weight:normal;letter-spacing:-0.280px;left:954.27px;width:100px;text-align:center;"><span>Thu,</span></div>
<div class="t" id="xb17" style="top:646.00px;font-size:11.0px;color:#8a8a8a;font-weight:normal;letter-spacing:-0.280px;left:954.27px;width:100px;text-align:center;"><span>May 6</span></div>
<div class="t" id="xa18" style="top:632.00px;font-size:11.0px;color:#8a8a8a;font-weight:normal;letter-spacing:-0.280px;left:999.43px;width:100px;text-align:center;"><span>Fri,</span></div>
<div class="t" id="xb18" style="top:646.00px;font-size:11.0px;color:#8a8a8a;font-weight:normal;letter-spacing:-0.280px;left:999.43px;width:100px;text-align:center;"><span>May 7</span></div>
<div class="t" id="xa19" style="top:632.00px;font-size:11.0px;color:#8a8a8a;font-weight:normal;letter-spacing:-0.280px;left:1044.59px;width:100px;text-align:center;"><span>Sat,</span></div>
<div class="t" id="xb19" style="top:646.00px;font-size:11.0px;color:#8a8a8a;font-weight:normal;letter-spacing:-0.280px;left:1044.59px;width:100px;text-align:center;"><span>May 8</span></div>
<div class="t" id="xa20" style="top:632.00px;font-size:11.0px;color:#8a8a8a;font-weight:normal;letter-spacing:-0.280px;left:1089.75px;width:100px;text-align:center;"><span>Sun,</span></div>
<div class="t" id="xb20" style="top:646.00px;font-size:11.0px;color:#8a8a8a;font-weight:normal;letter-spacing:-0.280px;left:1089.75px;width:100px;text-align:center;"><span>May 9</span></div>
<div class="t" id="xa21" style="top:632.00px;font-size:11.0px;color:#8a8a8a;font-weight:normal;letter-spacing:-0.280px;left:1134.91px;width:100px;text-align:center;"><span>Mon,</span></div>
<div class="t" id="xb21" style="top:646.00px;font-size:11.0px;color:#8a8a8a;font-weight:normal;letter-spacing:-0.280px;left:1134.91px;width:100px;text-align:center;"><span>May 10</span></div>
<div class="t" id="xa22" style="top:632.00px;font-size:11.0px;color:#8a8a8a;font-weight:normal;letter-spacing:-0.280px;left:1180.07px;width:100px;text-align:center;"><span>Tue,</span></div>
<div class="t" id="xb22" style="top:646.00px;font-size:11.0px;color:#8a8a8a;font-weight:normal;letter-spacing:-0.280px;left:1180.07px;width:100px;text-align:center;"><span>May 11</span></div>
<div class="t" id="xa23" style="top:632.00px;font-size:11.0px;color:#8a8a8a;font-weight:normal;letter-spacing:-0.280px;left:1225.23px;width:100px;text-align:center;"><span>Wed,</span></div>
<div class="t" id="xb23" style="top:646.00px;font-size:11.0px;color:#8a8a8a;font-weight:normal;letter-spacing:-0.280px;left:1225.23px;width:100px;text-align:center;"><span>May 12</span></div>
<div class="t" id="xa24" style="top:632.00px;font-size:11.0px;color:#8a8a8a;font-weight:normal;letter-spacing:-0.280px;left:1270.39px;width:100px;text-align:center;"><span>Thu,</span></div>
<div class="t" id="xb24" style="top:646.00px;font-size:11.0px;color:#8a8a8a;font-weight:normal;letter-spacing:-0.280px;left:1270.39px;width:100px;text-align:center;"><span>May 13</span></div>
<div class="t" id="xa25" style="top:632.00px;font-size:11.0px;color:#8a8a8a;font-weight:normal;letter-spacing:-0.280px;left:1315.55px;width:100px;text-align:center;"><span>Fri,</span></div>
<div class="t" id="xb25" style="top:646.00px;font-size:11.0px;color:#8a8a8a;font-weight:normal;letter-spacing:-0.280px;left:1315.55px;width:100px;text-align:center;"><span>May 14</span></div>
<div class="t" id="xa26" style="top:632.00px;font-size:11.0px;color:#8a8a8a;font-weight:normal;letter-spacing:-0.280px;left:1360.71px;width:100px;text-align:center;"><span>Sat,</span></div>
<div class="t" id="xb26" style="top:646.00px;font-size:11.0px;color:#8a8a8a;font-weight:normal;letter-spacing:-0.280px;left:1360.71px;width:100px;text-align:center;"><span>May 15</span></div>
<div class="t" id="xa27" style="top:632.00px;font-size:11.0px;color:#8a8a8a;font-weight:normal;letter-spacing:-0.280px;left:1405.87px;width:100px;text-align:center;"><span>Sun,</span></div>
<div class="t" id="xb27" style="top:646.00px;font-size:11.0px;color:#8a8a8a;font-weight:normal;letter-spacing:-0.280px;left:1405.87px;width:100px;text-align:center;"><span>May 16</span></div>
<div class="t" id="xa28" style="top:632.00px;font-size:11.0px;color:#8a8a8a;font-weight:normal;letter-spacing:-0.280px;left:1451.03px;width:100px;text-align:center;"><span>Mon,</span></div>
<div class="t" id="xb28" style="top:646.00px;font-size:11.0px;color:#8a8a8a;font-weight:normal;letter-spacing:-0.280px;left:1451.03px;width:100px;text-align:center;"><span>May 17</span></div>
<div class="t" id="xa29" style="top:632.00px;font-size:11.0px;color:#8a8a8a;font-weight:normal;letter-spacing:-0.280px;left:1496.19px;width:100px;text-align:center;"><span>Tue,</span></div>
<div class="t" id="xb29" style="top:646.00px;font-size:11.0px;color:#8a8a8a;font-weight:normal;letter-spacing:-0.280px;left:1496.19px;width:100px;text-align:center;"><span>May 18</span></div>
<div class="t" id="f1" style="top:752.00px;font-size:14.0px;color:#2a75c9;font-weight:normal;letter-spacing:-0.216px;left:1430.30px;"><span>More Info</span></div>
<div class="abs" style="left:1496.2px;top:750px;width:1px;height:17.5px;background:#c8c8c8;"></div>
<div class="t" id="f2" style="top:752.00px;font-size:14.0px;color:#2a75c9;font-weight:normal;letter-spacing:-0.289px;left:1506.60px;"><span>Terms of Use</span></div>
</body></html>
